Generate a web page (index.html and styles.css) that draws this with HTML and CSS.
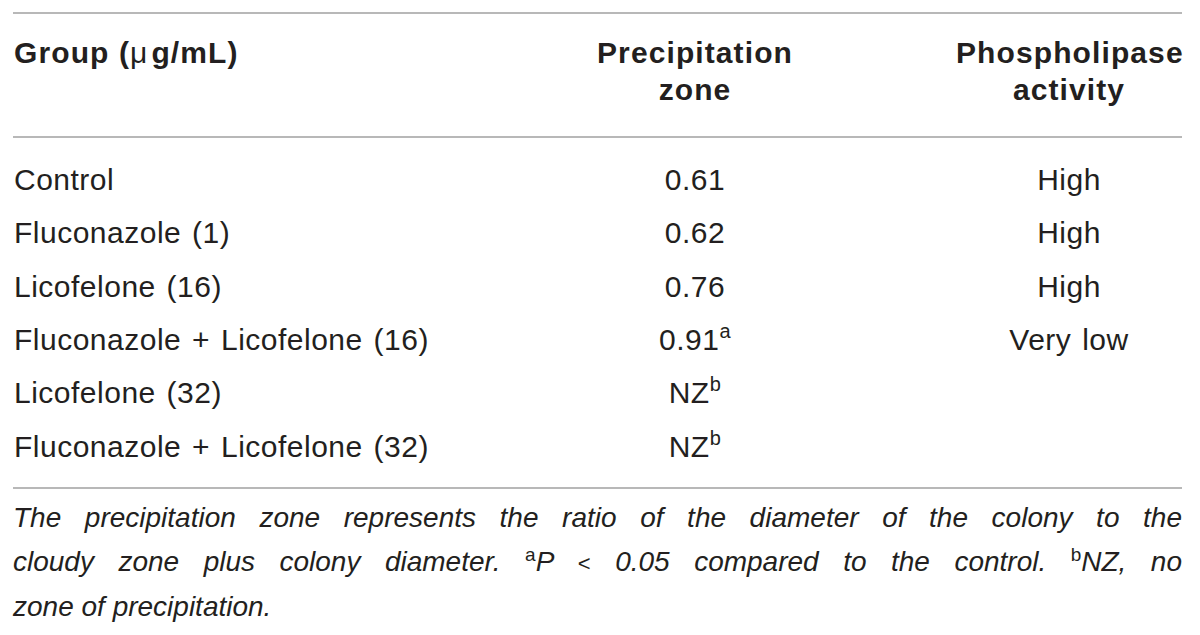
FILE: index.html
```html
<!DOCTYPE html>
<html lang="en">
<head>
  <meta charset="UTF-8" />
  <meta name="viewport" content="width=device-width, initial-scale=1.0" />
  <title>Phospholipase activity</title>
  <link rel="stylesheet" href="styles.css">
</head>
<body>
  <div class="table-wrap">
    <table class="data">
      <colgroup>
        <col class="col-group">
        <col class="col-zone">
        <col class="col-activity">
      </colgroup>
      <thead>
        <tr>
          <th class="left">Group (<span class="mu">μ</span>g/mL)</th>
          <th>Precipitation<br>zone</th>
          <th>Phospholipase<br>activity</th>
        </tr>
      </thead>
      <tbody>
        <tr>
          <td class="left">Control</td>
          <td>0.61</td>
          <td>High</td>
        </tr>
        <tr>
          <td class="left">Fluconazole (1)</td>
          <td>0.62</td>
          <td>High</td>
        </tr>
        <tr>
          <td class="left">Licofelone (16)</td>
          <td>0.76</td>
          <td>High</td>
        </tr>
        <tr>
          <td class="left">Fluconazole + Licofelone (16)</td>
          <td>0.91<sup>a</sup></td>
          <td>Very low</td>
        </tr>
        <tr>
          <td class="left">Licofelone (32)</td>
          <td>NZ<sup>b</sup></td>
          <td></td>
        </tr>
        <tr>
          <td class="left">Fluconazole + Licofelone (32)</td>
          <td>NZ<sup>b</sup></td>
          <td></td>
        </tr>
      </tbody>
    </table>
    <p class="footnote">
      <span class="line">The precipitation zone represents the ratio of the diameter of the colony to the</span>
      <span class="line">cloudy zone plus colony diameter. <sup>a</sup>P <span class="lt">&lt;</span> 0.05 compared to the control. <sup>b</sup>NZ, no</span>
      <span class="line last">zone of precipitation.</span>
    </p>
  </div>
</body>
</html>
```

FILE: styles.css
```css
:root {
  --text: #231f20;
  --rule: #b8b8b8;
}

body {
  margin: 0;
  background: #fff;
  color: var(--text);
  font-family: "Liberation Sans", Arial, sans-serif;
}

.table-wrap {
  width: 1169px;
  margin: 12px 0 0 13px;
}

.data {
  width: 100%;
  border-collapse: collapse;
  table-layout: fixed;
  font-size: 30px;
  line-height: 37.4px;
}

.col-group { width: 421px; }
.col-zone { width: 522px; }
.col-activity { width: 226px; }

.data thead {
  border-top: 2px solid var(--rule);
  border-bottom: 2px solid var(--rule);
}

.data th {
  font-weight: bold;
  letter-spacing: 1.1px;
  text-align: center;
  vertical-align: top;
  padding: 20px 0 27px;
  white-space: nowrap;
}

.data th .mu {
  font-weight: normal;
  margin-right: 3px;
}

.data td {
  text-align: center;
  padding: 8px 0;
  letter-spacing: 0.5px;
  word-spacing: 2px;
  white-space: nowrap;
}

.data .left {
  text-align: left;
  padding-left: 1px;
}

.data tbody tr:first-child td { padding-top: 23px; }
.data tbody tr:last-child td { padding-bottom: 22px; }

.data tbody {
  border-bottom: 2px solid var(--rule);
}

.data sup {
  font-size: 20px;
  line-height: 0;
  vertical-align: 12px;
}

.footnote {
  margin: 7px 0 0;
  font-size: 28px;
  line-height: 43.5px;
  font-style: italic;
}

.footnote .line {
  display: block;
  text-align: justify;
  text-align-last: justify;
}

.footnote .line.last {
  text-align-last: left;
}

.footnote sup {
  font-style: normal;
  font-size: 19px;
  line-height: 0;
  vertical-align: 10px;
}

.footnote .lt {
  font-style: normal;
  font-size: 22px;
}
```
